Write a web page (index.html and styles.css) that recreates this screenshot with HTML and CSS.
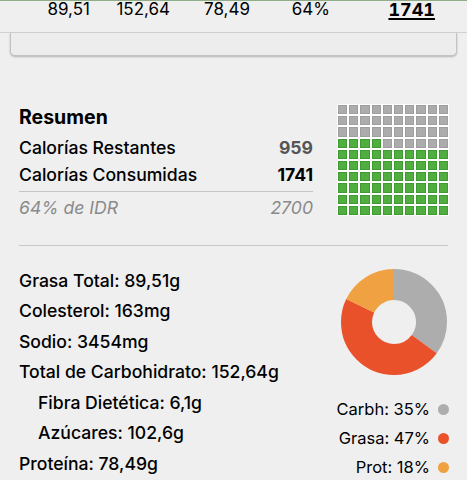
FILE: index.html
```html
<!DOCTYPE html>
<html lang="es">
<head>
<meta charset="utf-8">
<title>Resumen</title>
<link rel="stylesheet" href="styles.css">
</head>
<body>
<div class="topbar">
  <div class="totals">
    <span>89,51</span><span>152,64</span><span>78,49</span><span>64%</span><span class="total-cal">1741</span>
  </div>
</div>
<div class="card"></div>

<section class="summary">
  <div class="summary-table">
    <h2 class="title">Resumen</h2>
    <div class="row"><span>Calorías Restantes</span><span class="val remaining">959</span></div>
    <div class="row consumed"><span>Calorías Consumidas</span><span class="val">1741</span></div>
    <div class="row idr"><span>64% de IDR</span><span>2700</span></div>
  </div>
  <div class="waffle">
    <i class="cell"></i><i class="cell"></i><i class="cell"></i><i class="cell"></i><i class="cell"></i><i class="cell"></i><i class="cell"></i><i class="cell"></i><i class="cell"></i><i class="cell"></i>
    <i class="cell"></i><i class="cell"></i><i class="cell"></i><i class="cell"></i><i class="cell"></i><i class="cell"></i><i class="cell"></i><i class="cell"></i><i class="cell"></i><i class="cell"></i>
    <i class="cell"></i><i class="cell"></i><i class="cell"></i><i class="cell"></i><i class="cell"></i><i class="cell"></i><i class="cell"></i><i class="cell"></i><i class="cell"></i><i class="cell"></i>
    <i class="cell on"></i><i class="cell on"></i><i class="cell on"></i><i class="cell on"></i><i class="cell"></i><i class="cell"></i><i class="cell"></i><i class="cell"></i><i class="cell"></i><i class="cell"></i>
    <i class="cell on"></i><i class="cell on"></i><i class="cell on"></i><i class="cell on"></i><i class="cell on"></i><i class="cell on"></i><i class="cell on"></i><i class="cell on"></i><i class="cell on"></i><i class="cell on"></i>
    <i class="cell on"></i><i class="cell on"></i><i class="cell on"></i><i class="cell on"></i><i class="cell on"></i><i class="cell on"></i><i class="cell on"></i><i class="cell on"></i><i class="cell on"></i><i class="cell on"></i>
    <i class="cell on"></i><i class="cell on"></i><i class="cell on"></i><i class="cell on"></i><i class="cell on"></i><i class="cell on"></i><i class="cell on"></i><i class="cell on"></i><i class="cell on"></i><i class="cell on"></i>
    <i class="cell on"></i><i class="cell on"></i><i class="cell on"></i><i class="cell on"></i><i class="cell on"></i><i class="cell on"></i><i class="cell on"></i><i class="cell on"></i><i class="cell on"></i><i class="cell on"></i>
    <i class="cell on"></i><i class="cell on"></i><i class="cell on"></i><i class="cell on"></i><i class="cell on"></i><i class="cell on"></i><i class="cell on"></i><i class="cell on"></i><i class="cell on"></i><i class="cell on"></i>
    <i class="cell on"></i><i class="cell on"></i><i class="cell on"></i><i class="cell on"></i><i class="cell on"></i><i class="cell on"></i><i class="cell on"></i><i class="cell on"></i><i class="cell on"></i><i class="cell on"></i>
  </div>
</section>

<hr class="divider">

<section class="nutrients">
  <ul class="nutrient-list">
    <li>Grasa Total: 89,51g</li>
    <li>Colesterol: 163mg</li>
    <li>Sodio: 3454mg</li>
    <li>Total de Carbohidrato: 152,64g</li>
    <li class="sub">Fibra Dietética: 6,1g</li>
    <li class="sub">Azúcares: 102,6g</li>
    <li>Proteína: 78,49g</li>
  </ul>
  <div class="macros">
    <svg class="donut" width="110" height="110" viewBox="0 0 110 110">
      <g transform="rotate(-90 55 55)" fill="none" stroke-width="31">
        <circle cx="55" cy="55" r="37.5" stroke="#adadad" stroke-dasharray="82.47 300" stroke-dashoffset="0"/>
        <circle cx="55" cy="55" r="37.5" stroke="#e9512a" stroke-dasharray="110.74 300" stroke-dashoffset="-82.47"/>
        <circle cx="55" cy="55" r="37.5" stroke="#f0a142" stroke-dasharray="42.41 300" stroke-dashoffset="-193.21"/>
      </g>
    </svg>
    <ul class="legend">
      <li>Carbh: 35% <span class="dot carb"></span></li>
      <li>Grasa: 47% <span class="dot fat"></span></li>
      <li>Prot: 18% <span class="dot prot"></span></li>
    </ul>
  </div>
</section>
</body>
</html>
```

FILE: styles.css
```css
* { box-sizing: border-box; }

body {
  margin: 0;
  background: #efefef;
  font-family: "Inter", "Liberation Sans", sans-serif;
  color: #000;
}

.topbar {
  height: 33px;
  border-top: 1px solid #8fae88;
  border-bottom: 1px solid #d2d2d2;
}

.totals {
  display: grid;
  grid-template-columns: 80px 80px 80px 80px 105px;
  justify-items: end;
  padding-left: 10px;
  font-size: 17px;
  line-height: 17px;
}

.total-cal {
  font-weight: 700;
  font-size: 18px;
  font-variant-numeric: tabular-nums;
  text-decoration: underline;
  text-decoration-thickness: 2px;
  text-underline-offset: 2px;
}

.card {
  margin: 0 10px;
  height: 23px;
  background: #ededed;
  border: 1px solid #c2c2c2;
  border-top: 0;
  border-radius: 0 0 5px 5px;
  box-shadow: 0 1px 2px rgba(0, 0, 0, 0.25);
}

.summary {
  display: flex;
  align-items: flex-start;
  gap: 24px;
  margin-top: 48px;
  padding: 0 18px 0 19px;
}

.summary-table {
  width: 294px;
}

.title {
  margin: 0;
  font-size: 19.5px;
  font-weight: 700;
  line-height: 26px;
}

.row {
  display: flex;
  justify-content: space-between;
  font-size: 17.6px;
  font-weight: 500;
  line-height: 26.5px;
}

.row:first-of-type { margin-top: 5px; }

.val { font-weight: 700; }
.remaining { color: #555; }

.consumed {
  padding-bottom: 3px;
  border-bottom: 1px solid #c4c4c4;
}

.idr {
  margin-top: 3px;
  font-style: italic;
  font-weight: 400;
  color: #8a8a8a;
}

.waffle {
  display: grid;
  grid-template-columns: repeat(10, 1fr);
  gap: 2px;
  padding: 1px;
  width: 112px;
  height: 112px;
  background: #fff;
}

.cell {
  display: block;
  background: #acacac;
  border: 1px solid #9e9e9e;
}

.cell.on {
  background: #4fae3d;
  border-color: #3f9a31;
}

.divider {
  margin: 23px 19px 0;
  border: 0;
  border-top: 1px solid #c8c8c8;
  height: 0;
}

.nutrients {
  display: flex;
  justify-content: space-between;
  padding: 0 18px 0 19px;
}

.nutrient-list {
  list-style: none;
  margin: 0;
  padding: 20px 0 0;
  font-size: 17.6px;
  font-weight: 500;
  line-height: 30.5px;
  white-space: nowrap;
}

.nutrient-list .sub { padding-left: 19px; }

.macros {
  width: 140px;
  padding-top: 21px;
  display: flex;
  flex-direction: column;
  align-items: flex-end;
}

.donut { display: block; }

.legend {
  list-style: none;
  margin: 18px 0 0;
  padding: 0;
  font-size: 16.5px;
  line-height: 29px;
  white-space: nowrap;
}

.legend li {
  display: flex;
  align-items: center;
  justify-content: flex-end;
  gap: 8px;
}

.dot {
  width: 11px;
  height: 11px;
  border-radius: 50%;
}

.dot.carb { background: #adadad; }
.dot.fat { background: #e9512a; }
.dot.prot { background: #f0a142; }
```
